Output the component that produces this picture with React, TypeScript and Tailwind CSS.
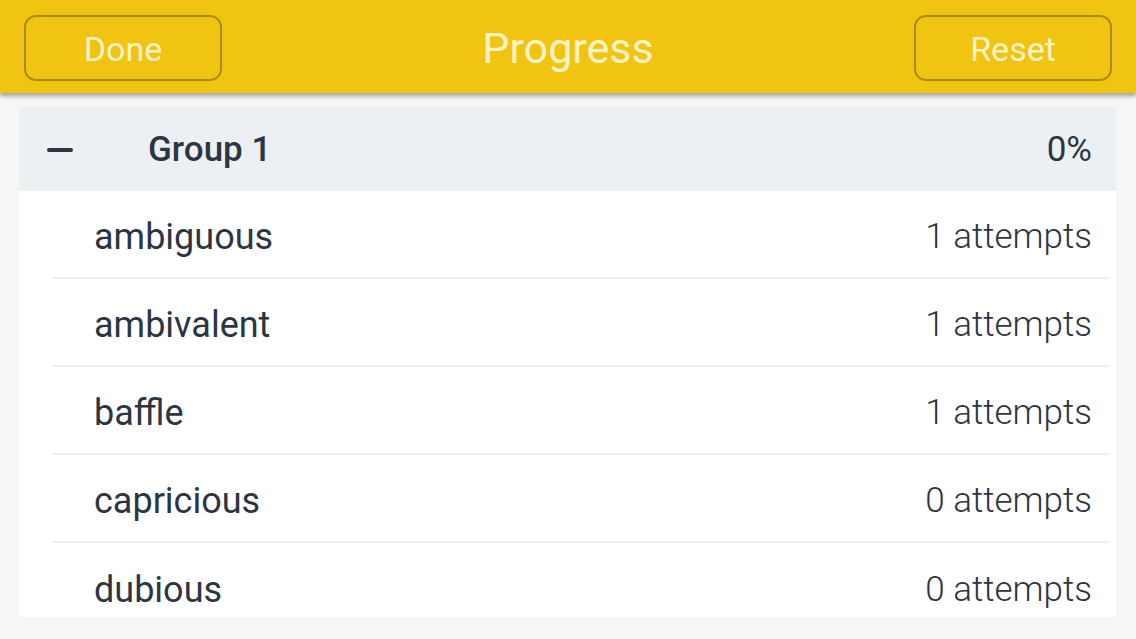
const words = [
  { word: 'ambiguous', attempts: 1 },
  { word: 'ambivalent', attempts: 1 },
  { word: 'baffle', attempts: 1 },
  { word: 'capricious', attempts: 0 },
  { word: 'dubious', attempts: 0 },
];

function HeaderButton({ label }: { label: string }) {
  return (
    <button className="w-[198px] h-[66px] rounded-[12px] border-2 border-[#a88d0e] text-[34px] font-normal text-[#fcf3c6] leading-none pt-[2px]">
      {label}
    </button>
  );
}

export default function App() {
  return (
    <div
      className="h-[639px] w-full overflow-hidden bg-[#f6f6f4] flex flex-col"
      style={{ fontFamily: 'Roboto, "Liberation Sans", sans-serif' }}
    >
      {/* Top bar */}
      <header className="h-[93px] shrink-0 bg-[#f2c412] flex items-center justify-between px-[24px] pt-[3px] shadow-[0_3px_4px_rgba(0,0,0,0.35)] relative z-10">
        <HeaderButton label="Done" />
        <h1 className="text-[43px] text-[#fcf3c6] font-normal">Progress</h1>
        <HeaderButton label="Reset" />
      </header>

      <main className="px-[19px] pt-[14px] pr-[20px]">
        <div className="bg-white">
          {/* Group row */}
          <div className="h-[84px] bg-[#edf0f2] flex items-center pl-[28px] pr-[24px] pt-[2px] text-[#2d3542]">
            <span className="w-[26px] h-[4px] bg-[#2d3542] rounded-sm" />
            <span className="ml-[75px] text-[35px] font-medium">Group 1</span>
            <span className="ml-auto text-[35px]">0%</span>
          </div>

          {words.map((w, i) => (
            <div
              key={w.word}
              className={
                i === words.length - 1
                  ? 'h-[74px] flex items-start pt-[28px] ml-[33px] mr-[6px]'
                  : 'h-[88px] flex items-center pt-[6px] ml-[33px] mr-[6px] border-b-2 border-[#efefef]'
              }
            >
              <span className="pl-[42px] text-[36px] text-[#2d3542] leading-[38px]">{w.word}</span>
              <span className="ml-auto pr-[18px] text-[35px] font-light text-[#2d3542] leading-[38px]">
                {w.attempts} attempts
              </span>
            </div>
          ))}
        </div>
      </main>
    </div>
  );
}
